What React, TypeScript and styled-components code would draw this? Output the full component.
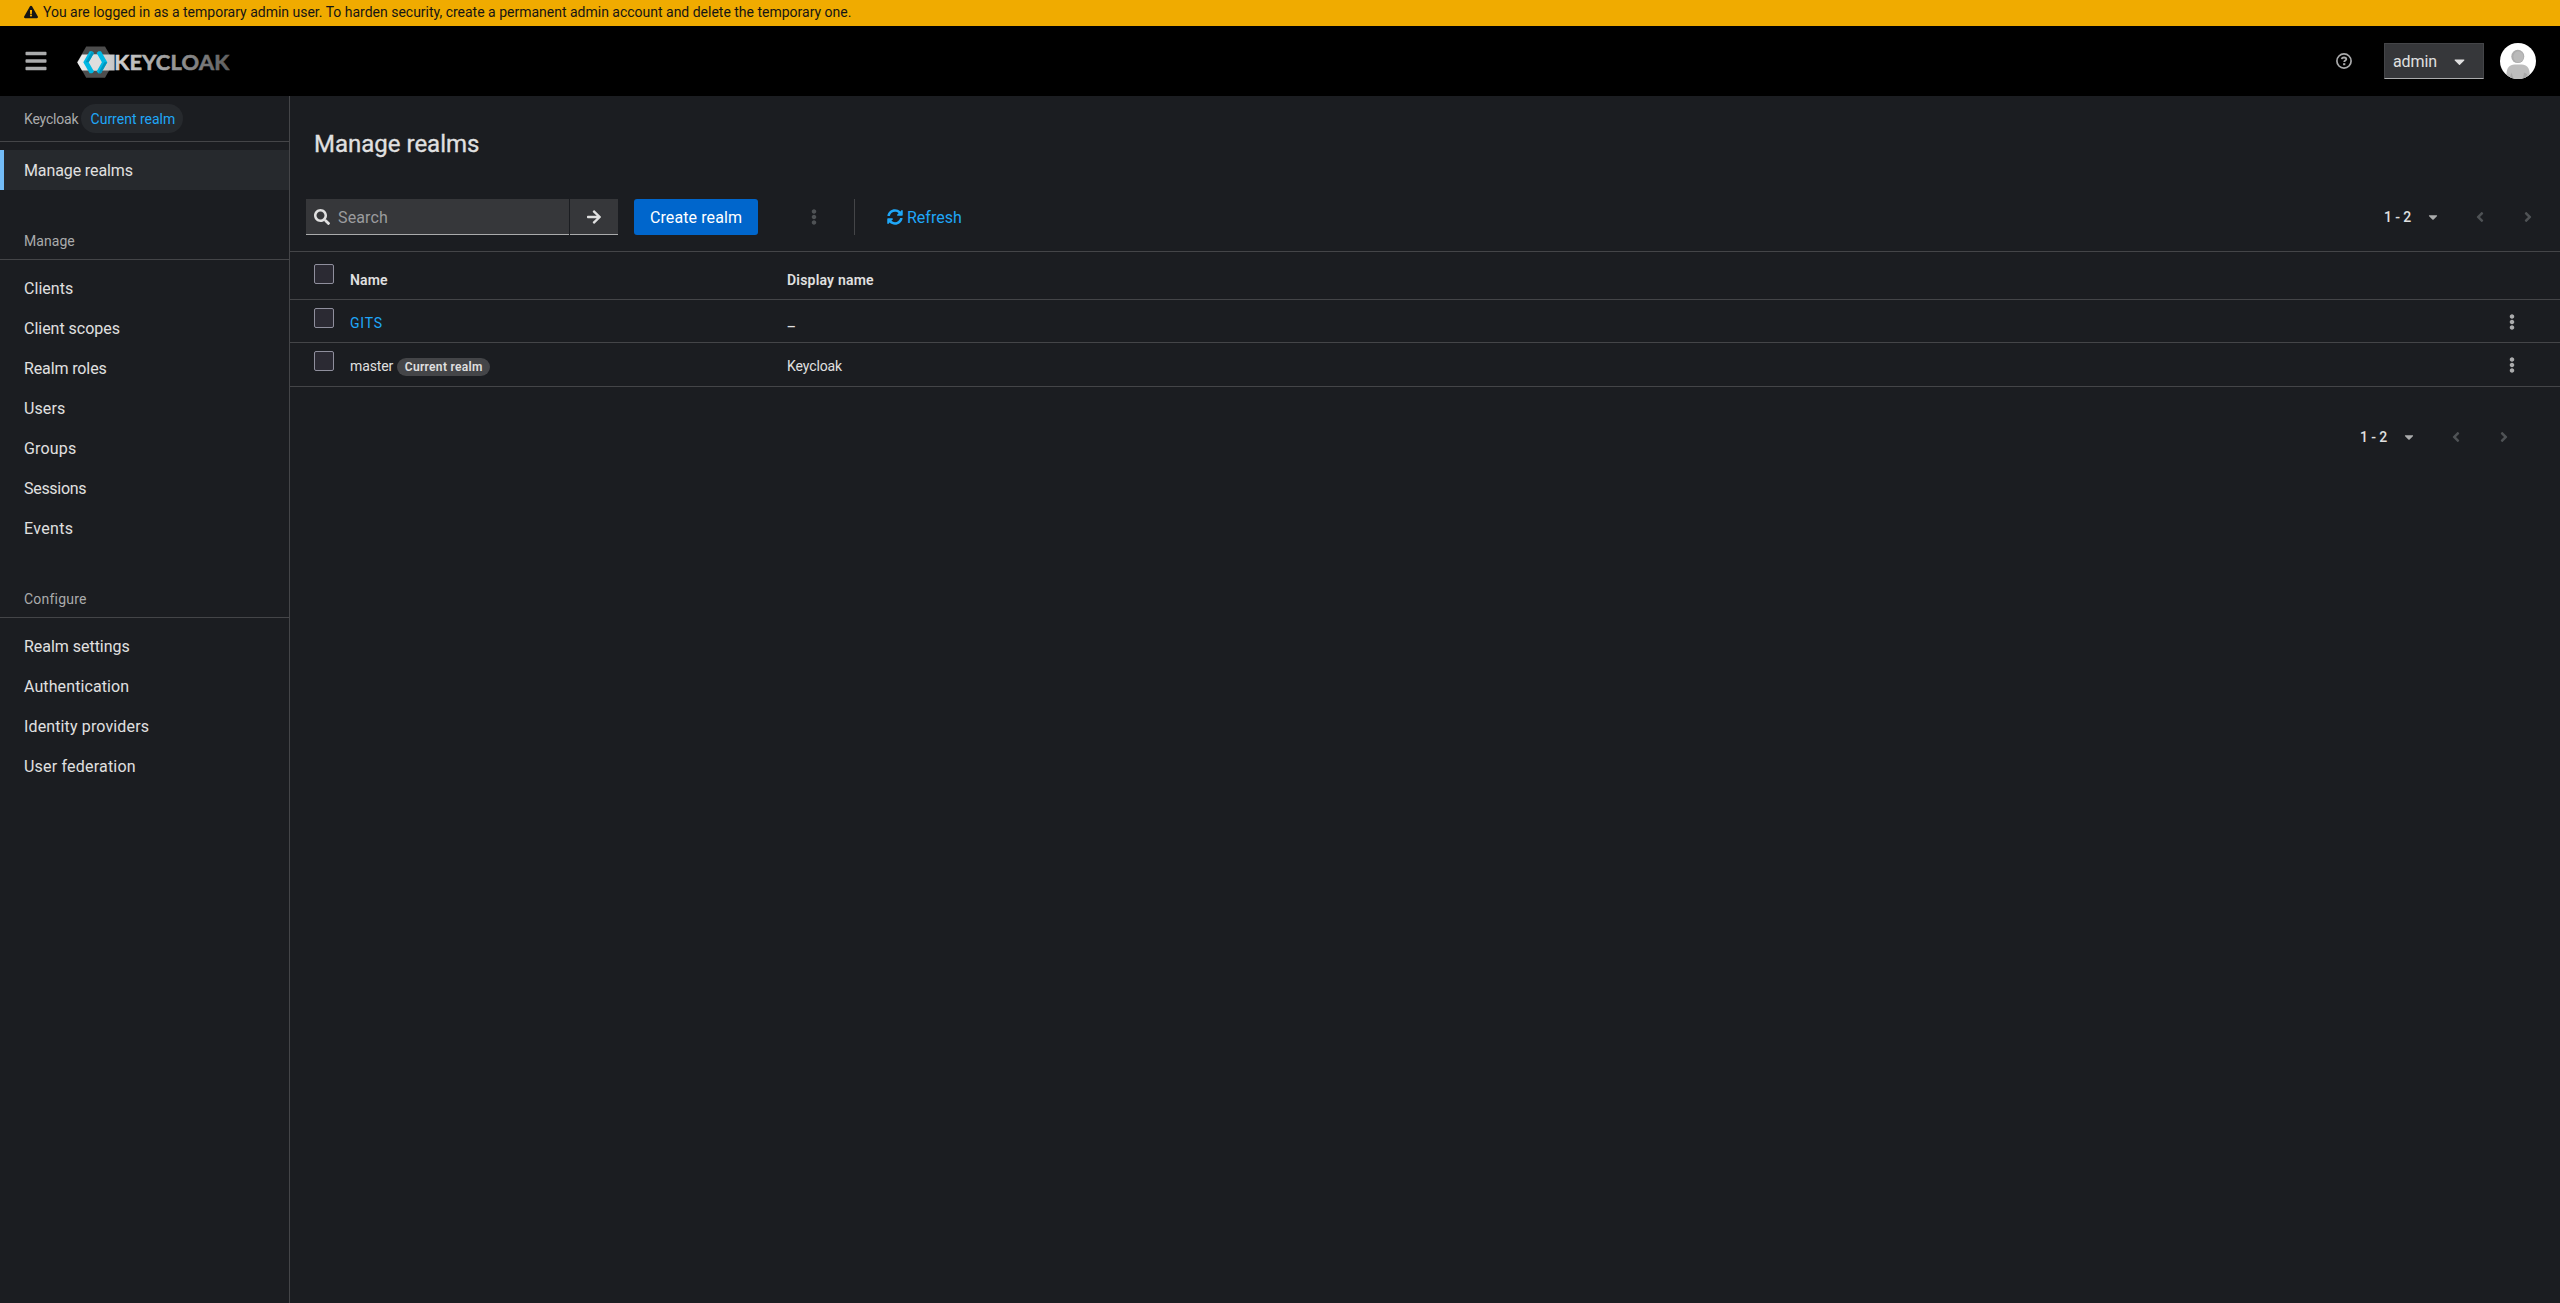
import React from "react";
import styled, { createGlobalStyle, css } from "styled-components";
import {
  FaAngleLeft,
  FaAngleRight,
  FaArrowRight,
  FaBars,
  FaCaretDown,
  FaEllipsisV,
  FaExclamationTriangle,
  FaSearch,
  FaSyncAlt,
} from "react-icons/fa";

const color = {
  page: "#1b1d21",
  raised: "#26292d",
  control: "#36373a",
  line: "#444548",
  text: "#e0e0e0",
  subtle: "#aaabac",
  link: "#1fa7f8",
  accent: "#73bcf7",
  primary: "#0066cc",
  warning: "#f0ab00",
};

const GlobalStyle = createGlobalStyle`
  *, *::before, *::after { box-sizing: border-box; }
  html, body { margin: 0; background: ${color.page}; }
  body {
    color: ${color.text};
    font-family: Roboto, "Liberation Sans", sans-serif;
    font-size: 14px;
    line-height: 21px;
  }
  ul { list-style: none; margin: 0; padding: 0; }
  a { text-decoration: none; color: inherit; }
  button { font: inherit; color: inherit; border: 0; padding: 0; background: none; }
  svg { display: block; flex: none; }
`;

const Page = styled.div`
  display: flex;
  flex-direction: column;
  height: 1303px;
  overflow: hidden;
`;

const Label = styled.span<{ $track?: number }>`
  letter-spacing: ${(p) => p.$track ?? 0}px;
  white-space: nowrap;
`;

const Banner = styled.div`
  display: flex;
  align-items: center;
  flex: none;
  gap: 5px;
  height: 26px;
  padding: 0 24px 2px;
  background: ${color.warning};
  color: #151515;
`;

const Masthead = styled.header`
  display: flex;
  align-items: center;
  flex: none;
  height: 70px;
  padding: 0 24px;
  background: #000;
`;

const NavToggle = styled.button`
  display: flex;
  width: 24px;
  height: 36px;
  align-items: center;
  justify-content: center;
  color: ${color.subtle};
`;

const Brand = styled.a`
  margin-left: 28px;
  padding-top: 2px;
`;

const MastheadTools = styled.div`
  display: flex;
  align-items: center;
  margin-left: auto;
`;

const HelpButton = styled.button`
  display: flex;
  color: ${color.subtle};
  margin-right: 32px;
`;

const UserMenu = styled.button`
  display: flex;
  align-items: center;
  justify-content: space-between;
  width: 100px;
  height: 36px;
  padding: 1px 15px 0 8px;
  margin-right: 16px;
  background: ${color.control};
  border: 1px solid ${color.line};
  border-bottom-color: ${color.subtle};
  font-size: 16px;
  line-height: 24px;
`;

const Body = styled.div`
  display: flex;
  flex: 1;
`;

const Sidebar = styled.nav`
  flex: none;
  width: 290px;
  border-right: 1px solid ${color.line};
`;

const RealmHeader = styled.div`
  display: flex;
  align-items: center;
  gap: 3px;
  height: 46px;
  padding: 0 24px;
  border-bottom: 1px solid ${color.line};
  color: ${color.subtle};
`;

const RealmName = styled(Label)`
  padding-top: 2px;
`;

const RealmPill = styled.span`
  display: flex;
  align-items: center;
  justify-content: center;
  width: 102px;
  height: 29px;
  padding: 2px 0 0 1px;
  border-radius: 15px;
  background: ${color.raised};
  color: ${color.link};
`;

const NavHeading = styled.h2`
  margin: 0;
  height: 70px;
  padding: 41px 24px 7px;
  border-bottom: 1px solid ${color.line};
  color: ${color.subtle};
  font-size: 14px;
  font-weight: 400;
`;

const NavList = styled.ul`
  padding-top: 8px;
`;

const NavLink = styled.a<{ $active?: boolean }>`
  display: flex;
  align-items: center;
  height: 40px;
  padding: 1px 24px 0 20px;
  border-left: 4px solid transparent;
  font-size: 16px;
  ${(p) =>
    p.$active &&
    css`
      border-left-color: ${color.accent};
      background: ${color.raised};
    `}
`;

const Main = styled.main`
  flex: 1;
  min-width: 0;
`;

const PageTitle = styled.h1`
  margin: 0;
  padding: 33px 24px 0;
  height: 87px;
  font-size: 24px;
  line-height: 31px;
  font-weight: 400;
  -webkit-text-stroke: 0.3px currentColor;
`;

const Toolbar = styled.div`
  display: flex;
  align-items: center;
  height: 69px;
  padding: 0 16px;
  border-bottom: 1px solid ${color.line};
`;

const SearchGroup = styled.div`
  display: flex;
  gap: 1px;
`;

const SearchField = styled.div`
  display: flex;
  align-items: center;
  gap: 8px;
  width: 263px;
  height: 36px;
  padding: 1px 8px 0;
  border-bottom: 1px solid ${color.subtle};
  background: ${color.control};
  font-size: 16px;
`;

const SearchPlaceholder = styled(Label)`
  color: #9b9c9e;
`;

const SearchSubmit = styled.button`
  display: flex;
  align-items: center;
  justify-content: center;
  width: 48px;
  height: 36px;
  border-bottom: 1px solid ${color.subtle};
  background: ${color.control};
`;

const PrimaryButton = styled.button`
  display: flex;
  align-items: center;
  justify-content: center;
  width: 124px;
  height: 36px;
  padding-top: 1px;
  margin-left: 16px;
  border-radius: 3px;
  background: ${color.primary};
  color: #fff;
  font-size: 16px;
`;

const KebabButton = styled.button<{ $disabled?: boolean }>`
  display: flex;
  justify-content: center;
  width: 38px;
  color: ${(p) => (p.$disabled ? "#4f5255" : color.subtle)};
`;

const ToolbarKebab = styled.div`
  display: flex;
  margin: 0 21px 0 37px;
`;

const Separator = styled.div`
  width: 1px;
  height: 36px;
  background: ${color.line};
`;

const RefreshButton = styled.button`
  display: flex;
  align-items: center;
  gap: 4px;
  margin-left: 32px;
  color: ${color.link};
  font-size: 16px;
`;

const Pager = styled.div<{ $bottom?: boolean }>`
  display: flex;
  align-items: center;
  margin-left: auto;
  font-weight: 500;
  ${(p) =>
    p.$bottom &&
    css`
      justify-content: flex-end;
      height: 100px;
      padding-right: 40px;
    `}
`;

const PagerRange = styled.span`
  padding-top: 1px;
  width: 42px;
`;

const PagerCaret = styled.span`
  display: flex;
  width: 31px;
  color: ${color.subtle};
`;

const PagerStep = styled.button`
  display: flex;
  align-items: center;
  justify-content: center;
  width: 48px;
  color: #4f5255;
`;

const PagerSteps = styled.div`
  display: flex;
  margin: 0 -8px 0 -1px;
`;

const Row = styled.div<{ $height: number }>`
  display: grid;
  grid-template-columns: 36px 437px 1fr 48px;
  height: ${(p) => p.$height}px;
  padding: 0 24px;
  border-bottom: 1px solid ${color.line};
`;

const Cell = styled.div<{ $top: number; $head?: boolean }>`
  display: flex;
  align-items: flex-start;
  gap: 4px;
  padding-top: ${(p) => p.$top}px;
  font-weight: ${(p) => (p.$head ? 600 : 400)};
`;

const ActionCell = styled(Cell)`
  justify-content: center;
`;

const Checkbox = styled.span`
  width: 20px;
  height: 20px;
  border: 1px solid #8f8f9d;
  border-radius: 2px;
  background: #2b2a33;
`;

const RealmLink = styled.a`
  color: ${color.link};
`;

const EmptyValue = styled.span`
  padding-top: 1px;
  font-family: "Noto Sans", sans-serif;
  font-size: 17px;
`;

const Badge = styled.span`
  display: flex;
  align-items: center;
  justify-content: center;
  width: 93px;
  height: 18px;
  margin-top: 2px;
  border-radius: 9px;
  background: ${color.line};
  font-size: 12px;
  font-weight: 600;
`;

const KeycloakLogo = () => (
  <svg width="154" height="32" viewBox="76 46.5 154 32">
    <defs>
      <linearGradient id="bar" x1="77" x2="115" gradientUnits="userSpaceOnUse">
        <stop offset="0" stopColor="#f0f0f0" />
        <stop offset="1" stopColor="#c6c6c6" />
      </linearGradient>
      <linearGradient id="word" x1="115" x2="229" gradientUnits="userSpaceOnUse">
        <stop offset="0" stopColor="#d2d2d2" />
        <stop offset="0.5" stopColor="#989898" />
        <stop offset="1" stopColor="#606060" />
      </linearGradient>
    </defs>
    <path d="M86.200 47h18.800l9 15.600-9 15.600H86.200l-9-15.600z" fill="#4d4d4d" />
    <path d="M82 55h32.600v16H82l-4.700-8z" fill="url(#bar)" />
    <path d="M93.500 55h5l4 7.800-4 8.200h-5l-4.500-8.200z" fill="#dedede" />
    <path d="M89.600 51.800h2.600l1.800 1.800-5.300 9.200 5.300 9.200-1.800 1.800h-2.600l-6.300-11z" fill="#00b8e3" />
    <path d="M94 53.600l-5.300 9.200h-3l5.800-10.200z" fill="#0095bd" />
    <path d="M101 51.800h-2.600l-1.800 1.800 5.300 9.200-5.300 9.200 1.800 1.800h2.600l6.300-11z" fill="#00b8e3" />
    <path d="M107.300 62.800h-3l-5.900 11h2.600z" fill="#0095bd" />
    <text
      x="114.300"
      y="70.800"
      fill="url(#word)"
      stroke="url(#word)"
      strokeWidth="0.600"
      fontFamily="Lato, 'Open Sans', sans-serif"
      fontSize="21.800"
      fontWeight="700"
      textLength="115"
    >
      KEYCLOAK
    </text>
  </svg>
);

const HelpIcon = () => (
  <svg width="16" height="16" viewBox="0 0 16 16" fill="none" stroke="currentColor">
    <circle cx="8" cy="8" r="7.100" strokeWidth="1.700" />
    <path d="M5.700 6.200C5.900 4.900 6.900 4.500 8 4.500c1.400 0 2.300.7 2.300 1.700 0 1.400-2.100 1.400-2.100 2.900" strokeWidth="1.800" />
    <path d="M7.100 11.200h2.200" strokeWidth="2" />
  </svg>
);

const Avatar = () => (
  <svg width="36" height="36" viewBox="0 0 36 36">
    <defs>
      <clipPath id="disc">
        <circle cx="18" cy="18" r="18" />
      </clipPath>
    </defs>
    <g clipPath="url(#disc)">
      <path d="M0 0h36v36H0z" fill="#fff" />
      <path d="M6.500 36v-5c0-5.800 3-9.500 8-9.500h7.200c5 0 8 3.700 8 9.500v5z" fill="#bdbdbd" />
      <path d="M11.500 29.500l2 6.500h-4zM24 29.500l3 1.500-1 5h-3z" fill="#a8a8a8" />
      <ellipse cx="17.800" cy="13.400" rx="6.500" ry="6.700" fill="#adadad" />
      <ellipse cx="18.400" cy="13.800" rx="5" ry="5.500" fill="#bababa" />
    </g>
  </svg>
);

type NavItem = { text: string; track: number };

const manageItems: NavItem[] = [
  { text: "Clients", track: 0.042 },
  { text: "Client scopes", track: -0.02 },
  { text: "Realm roles", track: -0.12 },
  { text: "Users", track: 0.115 },
  { text: "Groups", track: 0.181 },
  { text: "Sessions", track: -0.293 },
  { text: "Events", track: 0.321 },
];

const configureItems: NavItem[] = [
  { text: "Realm settings", track: -0.028 },
  { text: "Authentication", track: 0.101 },
  { text: "Identity providers", track: 0.134 },
  { text: "User federation", track: 0.2 },
];

const NavSection = ({ title, track, items }: { title: string; track: number; items: NavItem[] }) => (
  <section>
    <NavHeading>
      <Label $track={track}>{title}</Label>
    </NavHeading>
    <NavList>
      {items.map((item) => (
        <li key={item.text}>
          <NavLink>
            <Label $track={item.track}>{item.text}</Label>
          </NavLink>
        </li>
      ))}
    </NavList>
  </section>
);

const Pagination = ({ bottom }: { bottom?: boolean }) => (
  <Pager $bottom={bottom}>
    <PagerRange>
      <Label $track={-0.1}>1 - 2</Label>
    </PagerRange>
    <PagerCaret>
      <FaCaretDown size={14} />
    </PagerCaret>
    <PagerSteps>
      <PagerStep aria-label="Previous page">
        <FaAngleLeft size={16} />
      </PagerStep>
      <PagerStep aria-label="Next page">
        <FaAngleRight size={16} />
      </PagerStep>
    </PagerSteps>
  </Pager>
);

export default function App() {
  return (
    <Page>
      <GlobalStyle />
      <Banner>
        <FaExclamationTriangle size={14} />
        <Label $track={-0.006}>
          You are logged in as a temporary admin user. To harden security, create a permanent admin account and delete
          the temporary one.
        </Label>
      </Banner>
      <Masthead>
        <NavToggle aria-label="Global navigation">
          <FaBars size={24} />
        </NavToggle>
        <Brand>
          <KeycloakLogo />
        </Brand>
        <MastheadTools>
          <HelpButton aria-label="Help">
            <HelpIcon />
          </HelpButton>
          <UserMenu>
            <Label $track={-0.087}>admin</Label>
            <FaCaretDown size={17} />
          </UserMenu>
          <Avatar />
        </MastheadTools>
      </Masthead>
      <Body>
        <Sidebar>
          <RealmHeader>
            <RealmName $track={-0.187}>Keycloak</RealmName>
            <RealmPill>
              <Label>Current realm</Label>
            </RealmPill>
          </RealmHeader>
          <NavList>
            <li>
              <NavLink $active>
                <Label $track={-0.111}>Manage realms</Label>
              </NavLink>
            </li>
          </NavList>
          <NavSection title="Manage" track={0.051} items={manageItems} />
          <NavSection title="Configure" track={0.215} items={configureItems} />
        </Sidebar>
        <Main>
          <PageTitle>
            <Label $track={0}>Manage realms</Label>
          </PageTitle>
          <Toolbar>
            <SearchGroup>
              <SearchField>
                <FaSearch size={16} />
                <SearchPlaceholder $track={0.133}>Search</SearchPlaceholder>
              </SearchField>
              <SearchSubmit aria-label="Search">
                <FaArrowRight size={16} />
              </SearchSubmit>
            </SearchGroup>
            <PrimaryButton>
              <Label $track={0.099}>Create realm</Label>
            </PrimaryButton>
            <ToolbarKebab>
              <KebabButton $disabled aria-label="Actions">
                <FaEllipsisV size={16} />
              </KebabButton>
            </ToolbarKebab>
            <Separator />
            <RefreshButton>
              <FaSyncAlt size={16} />
              <Label>Refresh</Label>
            </RefreshButton>
            <Pagination />
          </Toolbar>
          <Row $height={48}>
            <Cell $top={12}>
              <Checkbox />
            </Cell>
            <Cell $top={18} $head>
              <Label $track={0.138}>Name</Label>
            </Cell>
            <Cell $top={18} $head>
              <Label $track={0.199}>Display name</Label>
            </Cell>
          </Row>
          <Row $height={43}>
            <Cell $top={8}>
              <Checkbox />
            </Cell>
            <Cell $top={13}>
              <RealmLink>
                <Label $track={0.8}>GITS</Label>
              </RealmLink>
            </Cell>
            <Cell $top={13}>
              <EmptyValue>–</EmptyValue>
            </Cell>
            <ActionCell $top={14}>
              <KebabButton aria-label="GITS actions">
                <FaEllipsisV size={16} />
              </KebabButton>
            </ActionCell>
          </Row>
          <Row $height={44}>
            <Cell $top={8}>
              <Checkbox />
            </Cell>
            <Cell $top={13}>
              <Label $track={-0.1}>master</Label>
              <Badge>
                <Label $track={0.319}>Current realm</Label>
              </Badge>
            </Cell>
            <Cell $top={13}>
              <Label $track={-0.1}>Keycloak</Label>
            </Cell>
            <ActionCell $top={14}>
              <KebabButton aria-label="master actions">
                <FaEllipsisV size={16} />
              </KebabButton>
            </ActionCell>
          </Row>
          <Pagination bottom />
        </Main>
      </Body>
    </Page>
  );
}
